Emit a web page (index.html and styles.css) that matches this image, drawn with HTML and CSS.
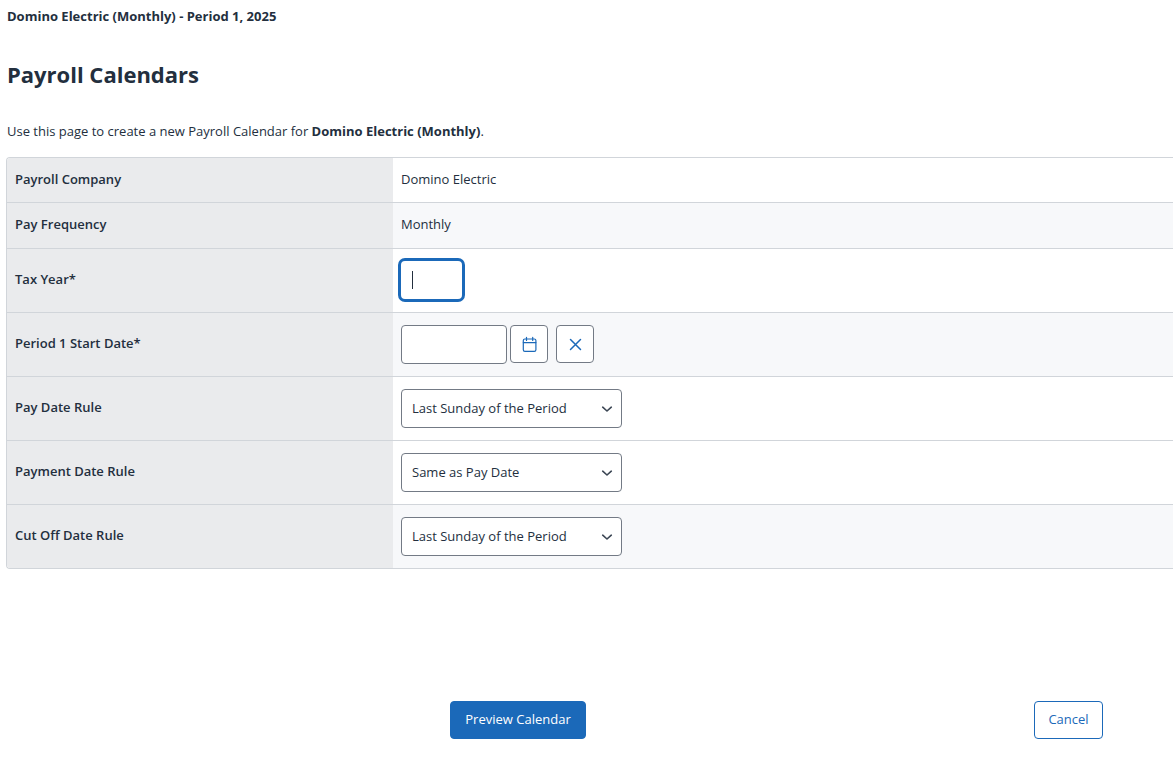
FILE: index.html
```html
<!DOCTYPE html>
<html lang="en">
<head>
<meta charset="utf-8">
<meta name="viewport" content="width=device-width, initial-scale=1">
<title>Payroll Calendars</title>
<link rel="stylesheet" href="styles.css">
</head>
<body>
<main class="page">
  <header class="intro-block">
    <p class="context">Domino Electric (Monthly) - Period 1, 2025</p>
    <h1 class="title">Payroll Calendars</h1>
    <p class="intro">Use this page to create a new Payroll Calendar for <strong>Domino Electric (Monthly)</strong>.</p>
  </header>
  <form class="form">
    <div class="panel">
      <table class="fields">
        <tr>
          <th scope="row">Payroll Company</th>
          <td class="value">Domino Electric</td>
        </tr>
        <tr class="shaded">
          <th scope="row">Pay Frequency</th>
          <td class="value">Monthly</td>
        </tr>
        <tr>
          <th scope="row"><label for="tax-year">Tax Year*</label></th>
          <td><div class="controls"><span class="caret-wrap"><input class="input year" id="tax-year" type="text" maxlength="4"></span></div></td>
        </tr>
        <tr class="shaded">
          <th scope="row"><label for="start-date">Period 1 Start Date*</label></th>
          <td>
            <div class="controls">
              <input class="input date" id="start-date" type="text">
              <button class="icon-button" type="button" aria-label="Choose date">
                <svg width="16" height="16" viewBox="0 0 16 16" fill="none" stroke="currentColor" stroke-width="1.2" stroke-linecap="round" stroke-linejoin="round"><rect x="2.300" y="3" width="12.600" height="12.300" rx="1.600"/><path d="M2.300 6.600h12.600M5.500 1.300v3.200M11.700 1.300v3.200"/></svg>
              </button>
              <button class="icon-button clear" type="button" aria-label="Clear date">
                <svg width="16" height="16" viewBox="0 0 16 16" fill="none" stroke="currentColor" stroke-width="1.500" stroke-linecap="round"><path d="M3.500 3.500l10 10M13.500 3.500l-10 10"/></svg>
              </button>
            </div>
          </td>
        </tr>
        <tr>
          <th scope="row"><label for="pay-rule">Pay Date Rule</label></th>
          <td><div class="controls select-wrap">
            <select class="select" id="pay-rule"><option>Last Sunday of the Period</option></select>
            <svg class="chevron" width="12" height="8" viewBox="0 0 12 8" fill="none" stroke="currentColor" stroke-width="1.600" stroke-linecap="round" stroke-linejoin="round"><path d="M1.700 2.200L6 6l4.300-3.800"/></svg>
          </div></td>
        </tr>
        <tr>
          <th scope="row"><label for="payment-rule">Payment Date Rule</label></th>
          <td><div class="controls select-wrap">
            <select class="select" id="payment-rule"><option>Same as Pay Date</option></select>
            <svg class="chevron" width="12" height="8" viewBox="0 0 12 8" fill="none" stroke="currentColor" stroke-width="1.600" stroke-linecap="round" stroke-linejoin="round"><path d="M1.700 2.200L6 6l4.300-3.800"/></svg>
          </div></td>
        </tr>
        <tr class="shaded">
          <th scope="row"><label for="cutoff-rule">Cut Off Date Rule</label></th>
          <td><div class="controls select-wrap">
            <select class="select" id="cutoff-rule"><option>Last Sunday of the Period</option></select>
            <svg class="chevron" width="12" height="8" viewBox="0 0 12 8" fill="none" stroke="currentColor" stroke-width="1.600" stroke-linecap="round" stroke-linejoin="round"><path d="M1.700 2.200L6 6l4.300-3.800"/></svg>
          </div></td>
        </tr>
      </table>
    </div>
    <div class="actions">
      <div class="primary-slot"><button class="button primary" type="button">Preview Calendar</button></div>
      <button class="button secondary" type="button">Cancel</button>
    </div>
  </form>
</main>
</body>
</html>
```
FILE: styles.css
```css
* {
  box-sizing: border-box;
}

body {
  margin: 0;
  background: #fff;
  color: #232f3e;
  font: 13px/20px "Open Sans", "Noto Sans", sans-serif;
}

.page {
  padding: 6px 0 16px 6px;
}

.intro-block {
  padding: 0 1px 16px;
}

.context,
.title,
.intro {
  margin: 0;
}

.context {
  font-weight: 700;
}

.title {
  margin-top: 32px;
  font-size: 22px;
  line-height: 32px;
  font-weight: 700;
}

.intro {
  margin-top: 31px;
}

.panel {
  border: 1px solid #d1d5da;
  border-right: 0;
  border-radius: 4px 0 0 4px;
  overflow: hidden;
}

.fields {
  width: 100%;
  border-collapse: separate;
  border-spacing: 0;
}

.fields th,
.fields td {
  padding: 12px 8px;
  text-align: left;
}

.fields th,
.fields .value {
  padding: 10px 8px 13px;
}

.fields th {
  width: 386px;
  background: #eaebed;
  font-weight: 600;
}

.fields tr {
  height: 44px;
}

.fields tr + tr {
  height: 46px;
}

.fields tr + tr th,
.fields tr + tr td {
  border-top: 1px solid #d1d5da;
}

.shaded td {
  background: #f7f8fa;
}

.controls {
  display: flex;
  align-items: flex-start;
}

.input,
.select,
.icon-button {
  margin: 0;
  border: 1px solid #737a85;
  border-radius: 4px;
  background: #fff;
  color: inherit;
  font: inherit;
}

.input {
  height: 39px;
  padding: 0 10px;
}

.date {
  width: 106px;
}

.year {
  display: block;
  width: 61px;
  height: 38px;
  border-color: #fff;
  outline: 3px solid #1b69b9;
}

.caret-wrap {
  position: relative;
  padding-bottom: 1px;
}

.caret-wrap::after {
  content: "";
  position: absolute;
  left: 11px;
  top: 10px;
  width: 1px;
  height: 18px;
  background: #232f3e;
}

.icon-button {
  display: flex;
  align-items: center;
  justify-content: center;
  width: 38px;
  height: 38px;
  margin-left: 3px;
  padding: 0;
  color: #1b69b9;
}

.clear {
  margin-left: 8px;
}

.select-wrap {
  position: relative;
  width: 221px;
}

.select {
  width: 100%;
  height: 39px;
  padding: 0 32px 2px 10px;
  appearance: none;
}

.chevron {
  position: absolute;
  right: 9px;
  top: 16px;
  color: #3b4654;
  pointer-events: none;
}

.actions {
  display: flex;
  gap: 4px;
  margin: 132px 70px 0 0;
}

.primary-slot {
  display: flex;
  flex: 1;
  justify-content: center;
}

.button {
  height: 38px;
  padding: 0 13px 2px;
  border: 1px solid #1b69b9;
  border-radius: 4px;
  font: inherit;
}

.primary {
  min-width: 136px;
  background: #1b69b9;
  color: #fff;
}

.secondary {
  min-width: 69px;
  background: #fff;
  color: #1b69b9;
}
```
